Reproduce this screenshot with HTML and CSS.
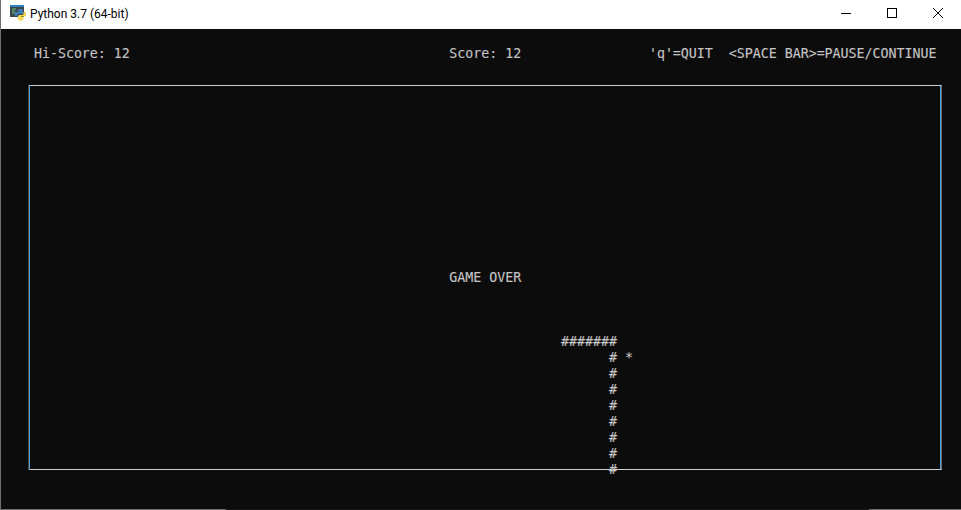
FILE: index.html
```html
<!DOCTYPE html>
<html lang="en">
<head>
<meta charset="utf-8">
<title>Python 3.7 (64-bit)</title>
<link rel="stylesheet" href="styles.css">
</head>
<body>
<div class="window">
  <header class="titlebar">
    <svg class="app-icon" width="16" height="16" viewBox="0 0 16 16" aria-hidden="true">
      <rect x="0" y="0" width="14" height="12" fill="#3c4650"/>
      <rect x="0" y="0" width="14" height="2" fill="#2f7fc0"/>
      <path d="M2 4h4M2 6h3M2 8h4" stroke="#5fc06a" stroke-width="1"/>
      <path d="M9 4h2.500a1.500 1.500 0 0 1 1.500 1.500V8a1 1 0 0 1-1 1H8.500a1.500 1.500 0 0 0-1.500 1.500V11H6a1.500 1.500 0 0 1-1.500-1.500V8.500A1.500 1.500 0 0 1 6 7h4V6.500H7.500V5.500A1.500 1.500 0 0 1 9 4z" fill="#3f7fb5"/>
      <path d="M13.500 7H15a1 1 0 0 1 1 1v2a1.500 1.500 0 0 1-1.500 1.500H11v.5h2.500v1A2 2 0 0 1 11.500 15.500H10a2 2 0 0 1-2-1.500v-2.500A1.500 1.500 0 0 1 9.500 10H12a1.500 1.500 0 0 0 1.500-1.500z" fill="#f7d64f"/>
    </svg>
    <span class="title">Python 3.7 (64-bit)</span>
    <div class="controls">
      <span class="control"><svg width="10" height="10" viewBox="0 0 10 10"><path d="M0 5.500h10" stroke="#000"/></svg></span>
      <span class="control"><svg width="10" height="10" viewBox="0 0 10 10"><rect x=".5" y=".5" width="9" height="9" fill="none" stroke="#000"/></svg></span>
      <span class="control"><svg width="10" height="10" viewBox="0 0 10 10"><path d="M0 0l10 10M10 0L0 10" stroke="#000" stroke-width="1"/></svg></span>
    </div>
  </header>
  <main class="console">
<pre class="status">    Hi-Score: 12                                        Score: 12                'q'=QUIT  &lt;SPACE BAR&gt;=PAUSE/CONTINUE</pre>
    <section class="arena">
<pre class="field">                                                    GAME OVER



                                                                  #######
                                                                        # *
                                                                        #
                                                                        #
                                                                        #
                                                                        #
                                                                        #
                                                                        #
                                                                        #</pre>
    </section>
  </main>
  <div class="edge">
    <span class="edge-seg edge-left"></span>
    <span class="edge-seg edge-right"></span>
  </div>
</div>
</body>
</html>
```
FILE: styles.css
```css
* { box-sizing: border-box; }
html, body { margin: 0; padding: 0; height: 100%; background: #0c0c0c; overflow: hidden; }
.window {
  display: flex;
  flex-direction: column;
  width: 961px;
  height: 510px;
  border-left: 1px solid #6f6f6f;
}
.titlebar {
  display: flex;
  align-items: center;
  flex: 0 0 29px;
  padding-left: 9px;
  background: #fff;
}
.app-icon { flex: none; margin-top: -3px; }
.title {
  margin-left: 4px;
  margin-top: -1px;
  font: 12px/16px Roboto, "Noto Sans", sans-serif;
  color: #000;
}
.controls { display: flex; margin-left: auto; align-self: stretch; }
.control {
  display: flex;
  align-items: center;
  justify-content: center;
  width: 46px;
  padding-bottom: 3px;
}
.control svg { display: block; }
.console {
  flex: 1 1 auto;
  min-height: 0;
  padding-top: 16px;
  background: #0c0c0c;
}
pre {
  margin: 0;
  font: 13.288px/16px "DejaVu Sans Mono", monospace;
  color: #c4c4c4;
  text-shadow: -0.4px 0 rgba(58, 150, 221, 0.22), 0.4px 0 rgba(226, 130, 60, 0.22);
}
.status { height: 17px; padding: 1px 0 0 1px; }
.arena {
  width: 913px;
  height: 385px;
  margin: 23px 0 0 28px;
  border-top: 1px solid #cccccc;
  border-bottom: 1px solid #cccccc;
  border-left: 1px solid #4a9fe0;
  border-right: 1px solid #75685c;
  box-shadow: -1px 0 0 #4f463c, inset -1px 0 0 #4a9fe0;
}
.field { padding: 184px 0 0 4px; }
.edge {
  display: flex;
  justify-content: space-between;
  flex: 0 0 1px;
  background: #1a1a1a;
}
.edge-seg { display: block; height: 1px; background: #6f6f6f; }
.edge-left { width: 225px; }
.edge-right { width: 92px; }
```
